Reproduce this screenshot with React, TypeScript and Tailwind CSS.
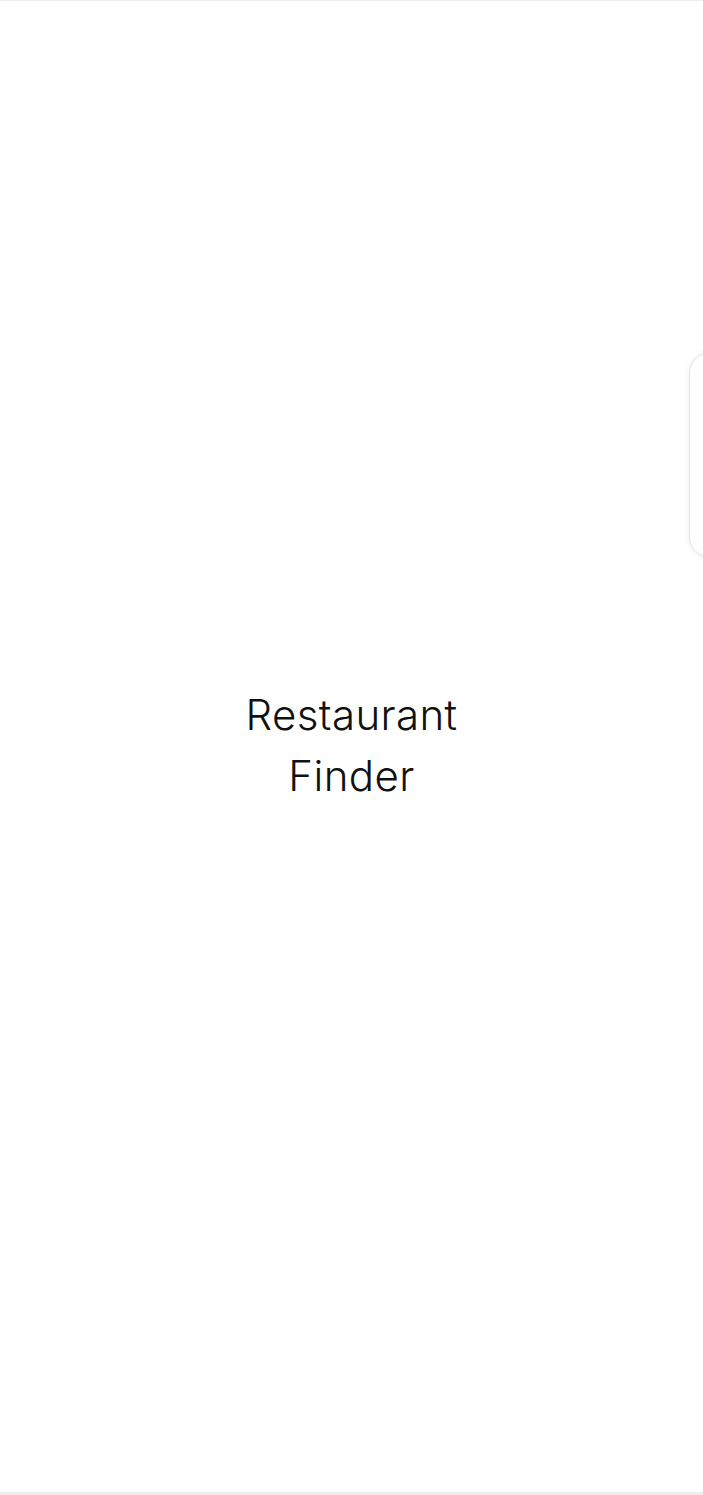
export default function App() {
  return (
    <div className="relative flex h-[1495px] w-full flex-col overflow-hidden bg-white">
      <div className="h-px w-full bg-[#ececec]" />
      <main className="flex flex-1 items-center justify-center pb-[4px]">
        <h1 className="w-[260px] text-center text-[42px] font-light leading-[61px] tracking-[0.4px] text-[#111] [font-family:Inter,'Noto_Sans',sans-serif]">
          Restaurant Finder
        </h1>
      </main>
      <div className="h-[3px] w-full bg-[#ececec]" />

      {/* side drawer peeking in from the right */}
      <div className="absolute left-[689px] top-[352px] h-[206px] w-[80px] rounded-[22px] border border-[#e6e6e6] bg-white shadow-[0_0_6px_rgba(0,0,0,0.08)]" />
    </div>
  );
}
